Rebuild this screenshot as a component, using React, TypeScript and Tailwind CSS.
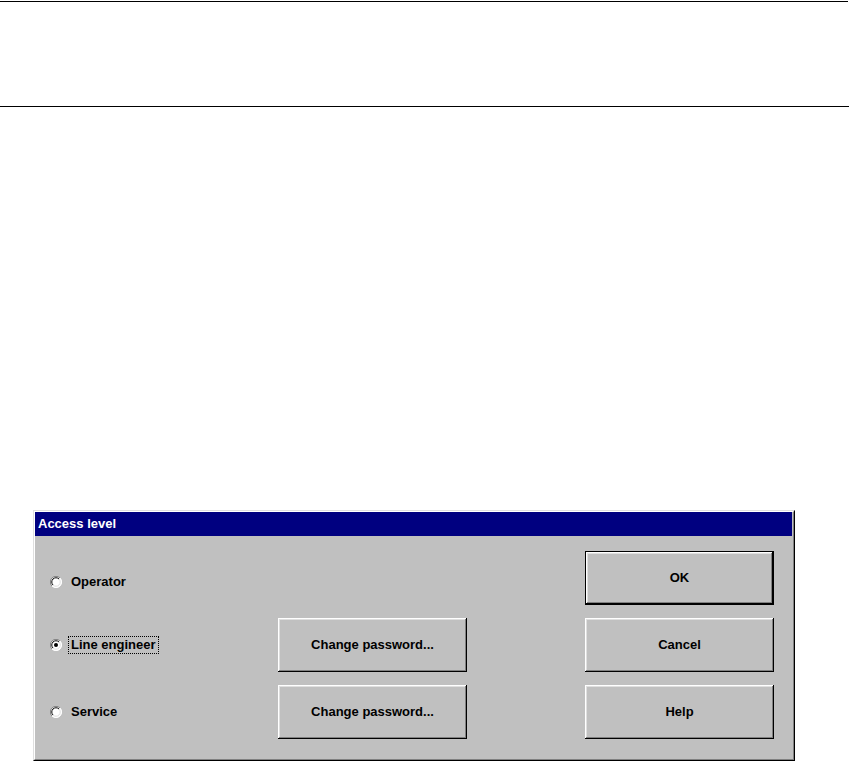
import React from 'react';

const FONT = { fontFamily: '"Liberation Sans", Arial, sans-serif' };

// classic 3D bevel for push buttons
const BEVEL =
  'shadow-[inset_-1px_-1px_0_#000,inset_1px_1px_0_#fff,inset_-2px_-2px_0_#808080,inset_2px_2px_0_#dfdfdf]';

function Radio({ checked }: { checked?: boolean }) {
  return (
    <svg width="12" height="12" viewBox="0 0 12 12" className="shrink-0">
      <circle cx="6" cy="6" r="5.5" fill="#fff" />
      {/* outer arcs */}
      <path d="M10 2 A5.5 5.5 0 0 0 2 10" fill="none" stroke="#808080" strokeWidth="1" />
      <path d="M2 10 A5.5 5.5 0 0 0 10 2" fill="none" stroke="#fff" strokeWidth="1" />
      {/* inner arcs */}
      <path d="M9 3 A4.2 4.2 0 0 0 3 9" fill="none" stroke="#000" strokeWidth="1" />
      <path d="M3 9 A4.2 4.2 0 0 0 9 3" fill="none" stroke="#dfdfdf" strokeWidth="1" />
      {checked && <circle cx="6" cy="6" r="2" fill="#000" />}
    </svg>
  );
}

function Button({ label, isDefault }: { label: string; isDefault?: boolean }) {
  return (
    <button
      className={`w-[189px] h-[54px] bg-[#c0c0c0] text-[13px] font-bold text-black ${BEVEL} ${
        isDefault ? 'border border-black' : ''
      }`}
      style={FONT}
    >
      {label}
    </button>
  );
}

const ROWS = [
  { label: 'Operator', checked: false, change: false, action: 'OK', isDefault: true },
  { label: 'Line engineer', checked: true, change: true, action: 'Cancel' },
  { label: 'Service', checked: false, change: true, action: 'Help' },
];

export default function App() {
  return (
    <div className="w-[851px] h-[761px] bg-white overflow-hidden" style={FONT}>
      <div className="mt-[1px] h-px w-[848px] bg-black" />
      <div className="mt-[104px] h-px w-[849px] bg-black" />

      {/* Access level dialog */}
      <div className="mt-[403px] ml-[33px] w-[762px] h-[251px] bg-[#c0c0c0] border border-t-[#dfdfdf] border-l-[#dfdfdf] border-r-black border-b-black">
        <div className="h-full border border-t-white border-l-white border-r-[#808080] border-b-[#808080] flex flex-col">
          <div className="h-[24px] mr-[1px] bg-[#000080] flex items-center pl-[3px]">
            <span className="text-white text-[13px] font-bold">Access level</span>
          </div>

          <div className="flex flex-col gap-[13px] pt-[15px] pl-[15px]">
            {ROWS.map((row, i) => (
              <div key={row.label} className="flex items-center">
                <div className={`w-[228px] flex items-center ${i === 0 ? 'mt-[7px]' : ''}`}>
                  <Radio checked={row.checked} />
                  <span
                    className={`ml-[6px] text-[13px] font-bold text-black leading-[16px] px-[2px] border border-dotted ${
                      row.checked ? 'border-black' : 'border-transparent'
                    }`}
                  >
                    {row.label}
                  </span>
                </div>
                <div className="w-[189px]">
                  {row.change && <Button label="Change password..." />}
                </div>
                <div className="ml-[118px]">
                  <Button label={row.action} isDefault={row.isDefault} />
                </div>
              </div>
            ))}
          </div>
        </div>
      </div>
    </div>
  );
}
